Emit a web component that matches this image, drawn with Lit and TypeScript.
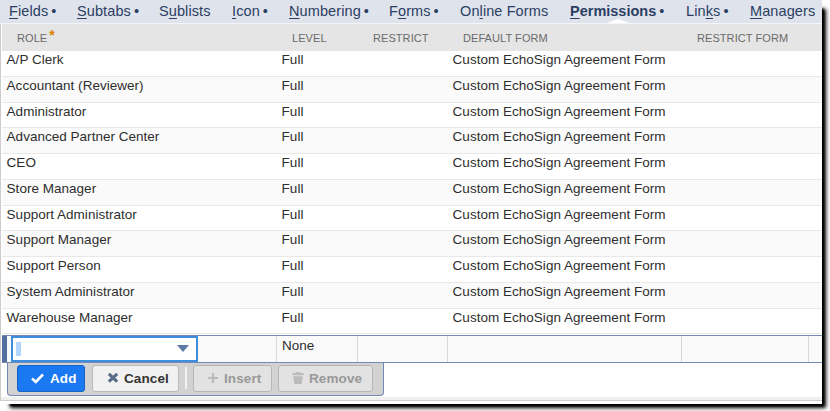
import { LitElement, html, css, svg } from "lit";
import { customElement } from "lit/decorators.js";
import { classMap } from "lit/directives/class-map.js";

interface Tab { pre: string; key: string; post: string; dot: boolean; active?: boolean; }

const TABS: Tab[] = [
  { pre: "", key: "F", post: "ields", dot: true },
  { pre: "", key: "S", post: "ubtabs", dot: true },
  { pre: "S", key: "u", post: "blists", dot: false },
  { pre: "", key: "I", post: "con", dot: true },
  { pre: "", key: "N", post: "umbering", dot: true },
  { pre: "F", key: "o", post: "rms", dot: true },
  { pre: "On", key: "l", post: "ine Forms", dot: false },
  { pre: "", key: "P", post: "ermissions", dot: true, active: true },
  { pre: "Lin", key: "k", post: "s", dot: true },
  { pre: "", key: "M", post: "anagers", dot: false },
];

const ROLES = [
  "A/P Clerk", "Accountant (Reviewer)", "Administrator", "Advanced Partner Center", "CEO",
  "Store Manager", "Support Administrator", "Support Manager", "Support Person",
  "System Administrator", "Warehouse Manager",
];

const ICONS = {
  check: svg`<path d="M1 6.500 4.800 10 12 2.500" fill="none" stroke="currentColor" stroke-width="2.600"/>`,
  cross: svg`<path d="M2 2 11 10.500M11 2 2 10.500" fill="none" stroke="currentColor" stroke-width="3.400"/>`,
  plus: svg`<path d="M6.500 1v11M1 6.500h11" fill="none" stroke="currentColor" stroke-width="2.400"/>`,
  trash: svg`<path d="M4.500 0h4l.8 1.200H12.500V3.500H.5V1.200H3.700ZM1.500 4.500h10L10.500 13h-8Z" fill="currentColor"/>`,
};

@customElement("app-root")
export class AppRoot extends LitElement {
  static styles = css`
    :host {
      display: block;
      width: 830px;
      height: 411px;
      overflow: hidden;
      background: #fff;
      font-family: "Liberation Sans", Arial, sans-serif;
      color: #2e2e2e;
    }
    .shade {
      position: relative;
      width: 822px;
      height: 404px;
    }
    .shade::before {
      content: "";
      position: absolute;
      inset: 7px 0 0 8px;
      box-shadow: 3px 3px 4px 1px #000, 2px 2px 2px #000;
    }
    .panel {
      position: relative;
      box-sizing: border-box;
      width: 822px;
      height: 404px;
      overflow: hidden;
      background: #fff;
    }
    .frame {
      box-sizing: border-box;
      height: 401px;
      border-left: 1px solid #ccc;
      border-bottom: 1px solid #ccc;
      box-shadow: inset 0 -3px 0 #f0f0f0;
    }
    .tabs {
      display: grid;
      grid-template-columns: 68px 82px 73px 57px 100px 71px 110px 116px 64px 72px;
      height: 23px;
      margin-left: -1px;
      padding-left: 9px;
      background: #dfe3eb;
      border-bottom: 1px solid #f4f5f8;
      font-size: 14.5px;
      line-height: 23px;
      letter-spacing: 0.1px;
      color: #2b3e63;
    }
    .tab { white-space: nowrap; position: relative; }
    .key { text-decoration: underline; text-decoration-thickness: 1px; text-underline-offset: 2px; }
    .dot { margin-left: 3px; font-weight: 400; }
    .active { font-weight: 700; letter-spacing: 0; }
    .active::after {
      content: "";
      position: absolute;
      left: 37px;
      top: 19px;
      border: solid transparent;
      border-width: 0 11px 4px;
      border-bottom-color: #fff;
    }
    .cols {
      display: grid;
      grid-template-columns: 275px 81px 90px 234px 1fr;
    }
    .head {
      height: 27px;
      margin-left: 1px;
      background: #e5e5e5;
      font-size: 11px;
      line-height: 29px;
      letter-spacing: 0.07px;
      color: #6a6a6a;
    }
    .head span { padding-left: 15px; white-space: nowrap; }
    .head .star { position: relative; top: -2px; padding: 0; margin-left: 2px; color: #d98200; font-size: 14px; font-weight: 700; line-height: 0; }
    .rows { display: grid; grid-template-rows: repeat(11, 25.76px); }
    .row {
      box-sizing: border-box;
      margin-left: 1px;
      border-bottom: 1px solid #e8e8e8;
      font-size: 13.5px;
      letter-spacing: 0.02px;
      line-height: 17px;
      white-space: nowrap;
    }
    .row span { padding-left: 4.6px; }
    .row:nth-child(even) { background: #fafafa; }
    .edit {
      box-sizing: border-box;
      grid-template-columns: 274px 81px 90px 234px 127px 1fr;
      height: 28px;
      margin: 0.6px 0 0 1px;
      border: solid #7489b3;
      border-width: 1px 0;
      background: #fafafa;
      font-size: 13.5px;
      line-height: 20px;
      letter-spacing: 0.02px;
    }
    .edit > div { border-left: 1px solid #d8d8d8; padding-left: 5px; }
    .edit .first {
      display: flex;
      padding: 0 0 0 4px;
      border-left: 5px solid #53709f;
    }
    .combo {
      box-sizing: border-box;
      display: flex;
      align-items: center;
      justify-content: space-between;
      width: 187px;
      height: 26px;
      padding: 0 7px 0 3px;
      border: 2px solid #3c8fde;
      background: #fff;
    }
    .caret { width: 5px; height: 14px; background: #b3d7ff; }
    .arrow { border: solid transparent; border-width: 7px 6px 0; border-top-color: #5a7ba5; }
    .actions {
      box-sizing: border-box;
      display: flex;
      align-items: flex-start;
      width: 377px;
      height: 33px;
      margin-left: 6px;
      padding: 2px 0 0 9px;
      border: 1px solid #7389b3;
      border-top: 0;
      border-radius: 0 0 4px 4px;
      background: #d2d2d2;
    }
    .btn {
      box-sizing: border-box;
      display: flex;
      align-items: center;
      gap: 5px;
      height: 27px;
      border: 1px solid #b9b9b9;
      border-radius: 3px;
      background: #f1f1f1;
      font: 700 13.5px "Liberation Sans", Arial, sans-serif;
      letter-spacing: 0.1px;
      color: #333;
      padding: 0;
    }
    .btn svg { width: 12px; height: 12px; }
    .add { width: 68px; padding-left: 13px; gap: 6px; background: #1a78f0; border-color: #1763c4; color: #fff; }
    .add svg { width: 13px; height: 13px; }
    .cancel { width: 87px; margin-left: 7px; padding-left: 14px; }
    .cancel svg { color: #5a6b85; }
    .sep { width: 2px; height: 22px; margin: 2px 6px 0; background: #f2f2f2; }
    .off { background: #e2e2e2; color: #999; border-color: #b5b5b5; }
    .off svg { color: #bbb; }
    .insert { width: 79px; padding-left: 13px; }
    .remove { width: 95px; margin-left: 6px; padding-left: 13px; }
  `;

  render() {
    return html`
      <div class="shade">
        <div class="panel">
          <div class="frame">
            <nav class="tabs">
              ${TABS.map((t) => html`<div class=${classMap({ tab: true, active: !!t.active })}>${t.pre}<span class="key">${t.key}</span>${t.post}${t.dot ? html`<span class="dot">•</span>` : ""}</div>`)}
            </nav>
            <div class="cols head">
              <span>ROLE<span class="star">*</span></span><span>LEVEL</span><span>RESTRICT</span><span>DEFAULT FORM</span><span>RESTRICT FORM</span>
            </div>
            <div class="rows">
              ${ROLES.map((r) => html`<div class="cols row"><span>${r}</span><span>Full</span><span></span><span>Custom EchoSign Agreement Form</span><span></span></div>`)}
            </div>
            <div class="cols edit">
              <div class="first"><div class="combo"><span class="caret"></span><span class="arrow"></span></div></div>
              <div>None</div><div></div><div></div><div></div><div></div>
            </div>
            <div class="actions">
              <button class="btn add"><svg viewBox="0 0 13 13">${ICONS.check}</svg>Add</button>
              <button class="btn cancel"><svg viewBox="0 0 13 13">${ICONS.cross}</svg>Cancel</button>
              <span class="sep"></span>
              <button class="btn off insert"><svg viewBox="0 0 13 13">${ICONS.plus}</svg>Insert</button>
              <button class="btn off remove"><svg viewBox="0 0 13 13">${ICONS.trash}</svg>Remove</button>
            </div>
          </div>
        </div>
      </div>
    `;
  }
}
